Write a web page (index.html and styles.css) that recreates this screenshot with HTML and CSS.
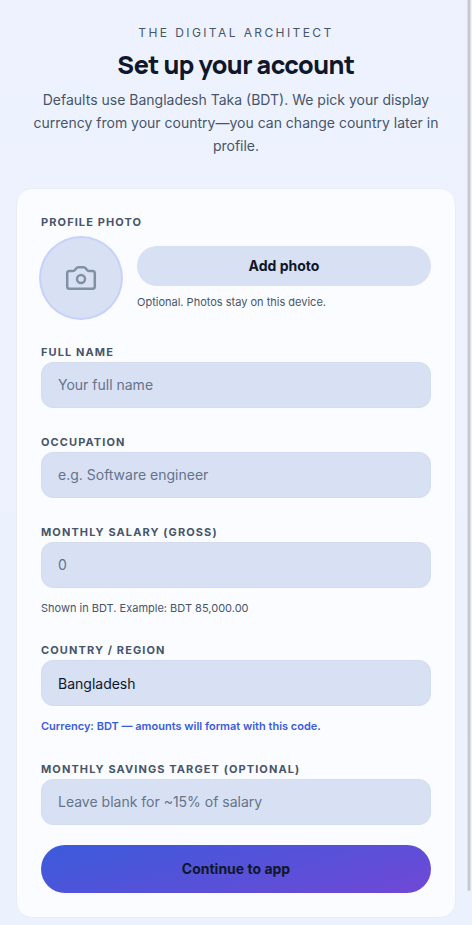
FILE: index.html
```html
<!DOCTYPE html>
<html lang="en">
<head>
<meta charset="utf-8">
<meta name="viewport" content="width=device-width, initial-scale=1">
<title>Set up your account</title>
<link rel="stylesheet" href="styles.css">
</head>
<body>
<main class="page">
  <header class="intro">
    <p class="eyebrow">THE DIGITAL ARCHITECT</p>
    <h1 class="title">Set up your account</h1>
    <p class="lead">Defaults use Bangladesh Taka (BDT). We pick your display currency from your country—you can change country later in profile.</p>
  </header>
  <form class="card">
    <section class="photo">
      <h2 class="label">PROFILE PHOTO</h2>
      <div class="photo-row">
        <button class="avatar" type="button" aria-label="Choose profile photo">
          <svg class="camera" viewBox="0 0 32 32" aria-hidden="true">
            <path d="M4.500 9H8q1.200 0 2-1l1.300-1.700Q12.200 5.200 13.500 5.200h5q1.300 0 2.200 1.100L22 8q.8 1 2 1h3.500q2.300 0 2.300 2.300v13.200q0 2.300-2.300 2.300h-23q-2.300 0-2.300-2.300V11.300Q2.200 9 4.500 9z"/>
            <circle cx="16" cy="17" r="4"/>
          </svg>
        </button>
        <div class="photo-side">
          <button class="add" type="button">Add photo</button>
          <p class="photo-hint">Optional. Photos stay on this device.</p>
        </div>
      </div>
    </section>
    <div class="field">
      <label class="label" for="name">FULL NAME</label>
      <input class="control" id="name" type="text" placeholder="Your full name">
    </div>
    <div class="field">
      <label class="label" for="job">OCCUPATION</label>
      <input class="control" id="job" type="text" placeholder="e.g. Software engineer">
    </div>
    <div class="field">
      <label class="label" for="salary">MONTHLY SALARY (GROSS)</label>
      <input class="control" id="salary" type="text" inputmode="decimal" placeholder="0">
      <p class="hint">Shown in BDT. Example: BDT 85,000.00</p>
    </div>
    <div class="field">
      <label class="label" for="country">COUNTRY / REGION</label>
      <select class="control" id="country"><option>Bangladesh</option></select>
      <p class="hint hint-accent">Currency: BDT — amounts will format with this code.</p>
    </div>
    <div class="field">
      <label class="label" for="target">MONTHLY SAVINGS TARGET (OPTIONAL)</label>
      <input class="control" id="target" type="text" inputmode="decimal" placeholder="Leave blank for ~15% of salary">
    </div>
    <button class="submit" type="submit">Continue to app</button>
  </form>
</main>
<div class="scroll-thumb" aria-hidden="true"></div>
</body>
</html>
```

FILE: styles.css
```css
* {
  box-sizing: border-box;
}

body {
  margin: 0;
  min-height: 100vh;
  background: linear-gradient(180deg, #eef2ff, #ecf1fe);
  color: #0f172a;
  font-family: Inter, "Liberation Sans", sans-serif;
}

h1, h2, p {
  margin: 0;
}

button, input, select {
  font-family: inherit;
}

.page {
  max-width: 560px;
  margin: 0 auto;
  padding: 24px 16px 8px;
}

.intro {
  padding: 0 16px;
  margin-bottom: 31px;
  color: #475569;
  text-align: center;
}

.eyebrow {
  font-size: 12px;
  line-height: 18px;
  letter-spacing: 0.2em;
}

.title {
  margin: 5px 0;
  color: #0f172a;
  font-family: Manrope, Inter, sans-serif;
  font-size: 25px;
  font-weight: 800;
  line-height: 36px;
  letter-spacing: -0.02em;
  font-optical-sizing: none;
}

.lead {
  font-size: 14px;
  line-height: 23px;
}

.card {
  display: flex;
  flex-direction: column;
  padding: 24px;
  border: 1px solid #e9edf5;
  border-radius: 16px;
  background: #fbfcff;
}

.label {
  display: block;
  color: #475569;
  font-size: 11px;
  font-weight: 700;
  line-height: 18px;
  letter-spacing: 0.1em;
}

.field {
  display: flex;
  flex-direction: column;
  gap: 1px;
  margin-top: 25px;
}

.photo-row {
  display: flex;
  align-items: center;
  gap: 16px;
  margin-top: 7px;
}

.avatar {
  display: grid;
  place-items: center;
  flex: none;
  width: 80px;
  height: 80px;
  padding: 0;
  border: 0;
  border-radius: 50%;
  background: #d8e0f3;
  box-shadow: 0 0 0 2px #c7d2fa;
}

.camera {
  width: 32px;
  height: 32px;
  fill: none;
  stroke: #8290a6;
  stroke-width: 2.5;
}

.photo-side {
  flex: 1;
  min-width: 0;
}

.add, .submit {
  display: block;
  width: 100%;
  padding: 0 0 2px;
  border: 0;
  border-radius: 24px;
  color: #0f172a;
  font-size: 14px;
  font-weight: 700;
}

.add {
  height: 40px;
  background: #d8e0f3;
}

.photo-hint, .hint {
  color: #475569;
  font-size: 11px;
  line-height: 16px;
}

.photo-hint {
  margin-top: 8px;
}

.hint {
  margin-top: 11px;
}

.hint-accent {
  color: #3b5bdb;
  font-weight: 600;
  line-height: 17px;
}

.control {
  width: 100%;
  height: 46px;
  padding: 0 16px;
  border: 1px solid #d4ddf0;
  border-radius: 12px;
  appearance: none;
  background: #d8e0f3;
  color: #0f172a;
  font-size: 14px;
}

input.control {
  padding-bottom: 2px;
}

.control::placeholder {
  color: #64748b;
  opacity: 1;
}

.submit {
  height: 48px;
  margin-top: 20px;
  background: linear-gradient(165deg, #3b5bdb, #7048d6);
}

.scroll-thumb {
  position: fixed;
  top: 0;
  right: 1px;
  width: 4px;
  height: 96.3vh;
  border: solid #dddfe8;
  border-width: 0 1px;
  border-radius: 0 0 2px 2px;
  background: #c9c9cb;
}
```
